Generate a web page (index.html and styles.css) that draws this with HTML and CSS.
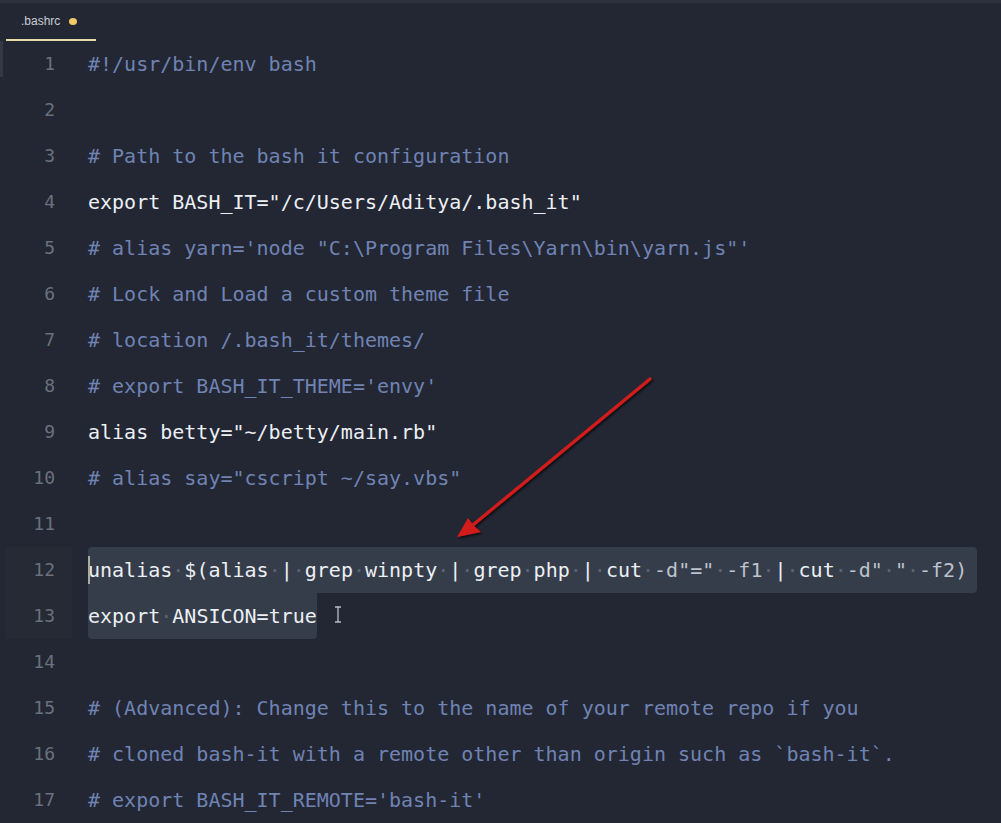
FILE: index.html
```html
<!DOCTYPE html>
<html>
<head>
<meta charset="utf-8">
<link rel="stylesheet" href="styles.css">
</head>
<body>
<div class="tabbar">
  <div class="tab"><span class="tab-name">.bashrc</span><span class="dot"></span></div>
</div>
<div class="editor">
  <div class="edge"></div>
  <div class="line"><span class="num">1</span><span class="code c">#!/usr/bin/env bash</span></div>
  <div class="line"><span class="num">2</span><span class="code"></span></div>
  <div class="line"><span class="num">3</span><span class="code c"># Path to the bash it configuration</span></div>
  <div class="line"><span class="num">4</span><span class="code">export BASH_IT="/c/Users/Aditya/.bash_it"</span></div>
  <div class="line"><span class="num">5</span><span class="code c"># alias yarn='node "C:\Program Files\Yarn\bin\yarn.js"'</span></div>
  <div class="line"><span class="num">6</span><span class="code c"># Lock and Load a custom theme file</span></div>
  <div class="line"><span class="num">7</span><span class="code c"># location /.bash_it/themes/</span></div>
  <div class="line"><span class="num">8</span><span class="code c"># export BASH_IT_THEME='envy'</span></div>
  <div class="line"><span class="num">9</span><span class="code">alias betty="~/betty/main.rb"</span></div>
  <div class="line"><span class="num">10</span><span class="code c"># alias say="cscript ~/say.vbs"</span></div>
  <div class="line"><span class="num">11</span><span class="code"></span></div>
  <div class="line active"><span class="num">12</span><span class="code"><span class="sel sel-first"><span class="caret"></span>unalias<span class="ws">·</span>$(alias<span class="ws">·</span>|<span class="ws">·</span>grep<span class="ws">·</span>winpty<span class="ws">·</span>|<span class="ws">·</span>grep<span class="ws">·</span>php<span class="ws">·</span>|<span class="ws">·</span>cut<span class="ws">·</span><span class="opt">-d"="</span><span class="ws">·</span><span class="opt">-f1</span><span class="ws">·</span>|<span class="ws">·</span>cut<span class="ws">·</span><span class="opt">-d"</span><span class="ws">·</span><span class="opt">"</span><span class="ws">·</span><span class="opt">-f2)</span></span></span></div>
  <div class="line active"><span class="num">13</span><span class="code"><span class="sel sel-last">export<span class="ws">·</span>ANSICON=true</span><span class="ibeam"><svg width="8" height="17" viewBox="0 0 8 17"><path d="M1 1h6M4 1v15M1 16h6" stroke="#b8bec8" stroke-width="1.3" fill="none"/></svg></span></span></div>
  <div class="line"><span class="num">14</span><span class="code"></span></div>
  <div class="line"><span class="num">15</span><span class="code c"># (Advanced): Change this to the name of your remote repo if you</span></div>
  <div class="line"><span class="num">16</span><span class="code c"># cloned bash-it with a remote other than origin such as `bash-it`.</span></div>
  <div class="line"><span class="num">17</span><span class="code c"># export BASH_IT_REMOTE='bash-it'</span></div>
</div>
<svg class="arrow" width="1001" height="823" viewBox="0 0 1001 823">
  <defs>
    <filter id="sh" x="-20%" y="-20%" width="140%" height="140%">
      <feDropShadow dx="1.5" dy="1.5" stdDeviation="1.2" flood-color="#000" flood-opacity="0.7"/>
    </filter>
  </defs>
  <g filter="url(#sh)">
    <line x1="650" y1="379" x2="468" y2="529" stroke="#d21d1d" stroke-width="3.2" stroke-linecap="round"/>
    <path d="M457 537 L468 518 L474 526 L481 532 Z" fill="#d21d1d"/>
  </g>
</svg>
</body>
</html>
```

FILE: styles.css
```css
html, body {
  margin: 0;
  padding: 0;
}
body {
  background: #222733;
  width: 1001px;
  height: 823px;
  overflow: hidden;
  position: relative;
  font-family: "DejaVu Sans Mono", "Liberation Mono", monospace;
}
.tabbar {
  height: 38px;
  border-top: 3px solid #2c313c;
  display: flex;
  align-items: flex-end;
}
.tab {
  margin-left: 6px;
  width: 90px;
  height: 36px;
  border-bottom: 2px solid #e6dba2;
  display: flex;
  align-items: center;
  box-sizing: border-box;
  padding-left: 15px;
  padding-bottom: 2px;
}
.tab-name {
  font-family: "Liberation Sans", Arial, sans-serif;
  font-size: 12px;
  color: #c9cdd4;
}
.dot {
  width: 8px;
  height: 7px;
  border-radius: 50%;
  background: #f2c869;
  margin-left: 9px;
}
.editor {
  position: relative;
}
.edge {
  position: absolute;
  left: 0;
  top: 0;
  width: 3px;
  height: 36px;
  background: #333844;
}
.line {
  display: flex;
  height: 46px;
  line-height: 46px;
}
.num {
  width: 55px;
  margin-right: 33px;
  text-align: right;
  font-size: 18px;
  color: #6b717c;
}
.line.active .num {
  background: linear-gradient(to right, transparent 5px, #252a35 5px, #252a35 72px, transparent 72px);
  width: 72px;
  padding-right: 17px;
  box-sizing: border-box;
  margin-right: 16px;
}
.code {
  font-size: 20px;
  color: #eceff4;
  white-space: pre;
  position: relative;
}
.code.c {
  color: #7083b3;
}
.sel {
  display: inline-block;
  background: #353d4a;
  position: relative;
}
.sel-first {
  padding-right: 10px;
  border-radius: 4px 4px 4px 0;
}
.sel-last {
  border-radius: 0 0 4px 4px;
}
.ws {
  color: #5c6573;
}
.opt {
  color: #bcc3cd;
}
.caret {
  position: absolute;
  left: 0;
  top: 9px;
  width: 2px;
  height: 28px;
  background: #a8ada0;
}
.ibeam {
  display: inline-block;
  margin-left: 17px;
  vertical-align: top;
  line-height: 0;
  padding-top: 13px;
}
.arrow {
  position: absolute;
  left: 0;
  top: 0;
  pointer-events: none;
}
```
